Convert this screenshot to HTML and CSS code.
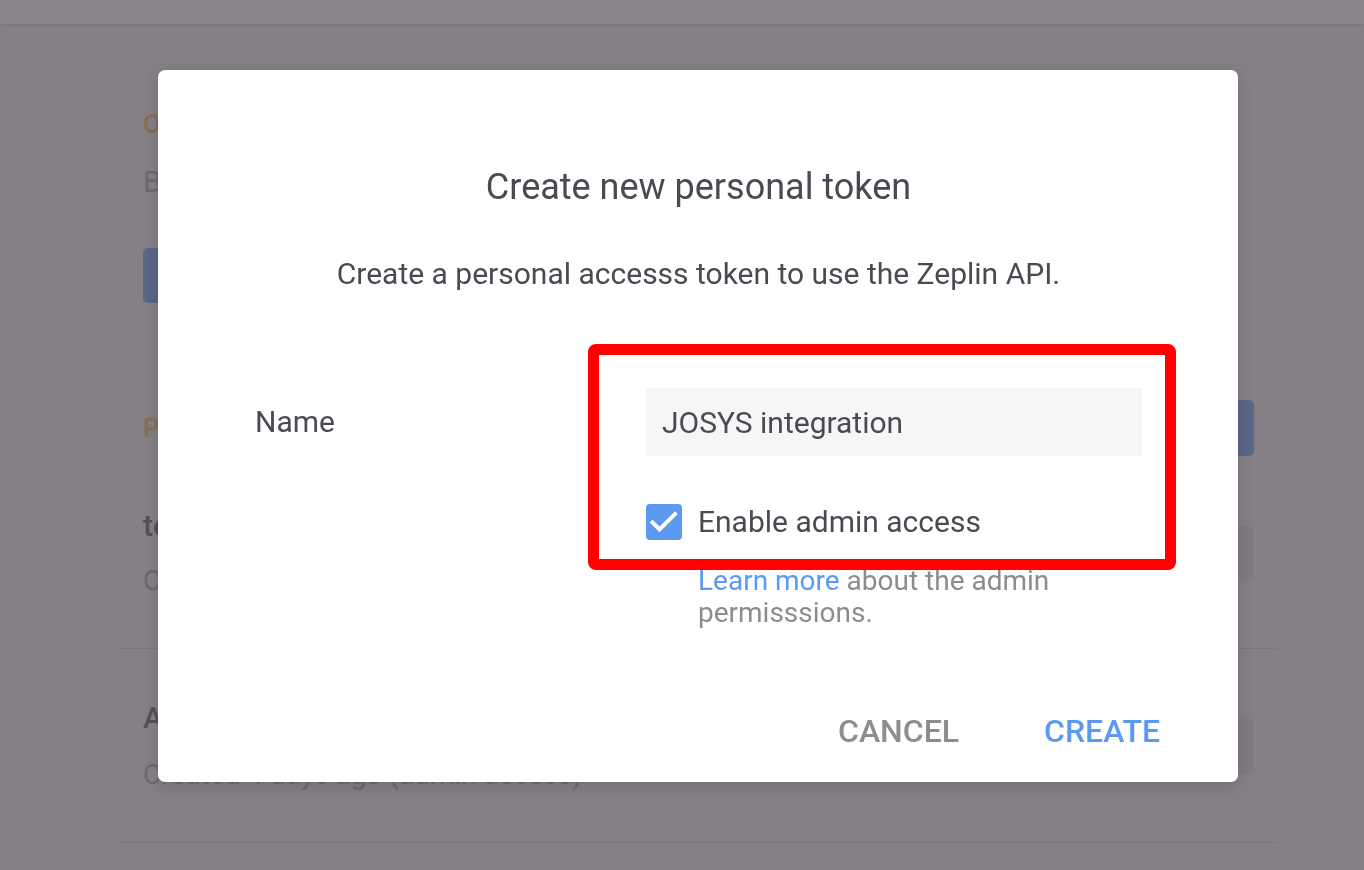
FILE: index.html
```html
<!DOCTYPE html>
<html lang="en">
<head>
<meta charset="utf-8">
<title>Create new personal token</title>
<link rel="stylesheet" href="styles.css">
</head>
<body>
<header class="topbar"></header>
<main class="page">
  <section class="section">
    <h2 class="section-title">OAuth apps</h2>
    <p class="section-text">Build apps</p>
    <button class="btn-primary">Create new app</button>
  </section>
  <section class="section tokens">
    <div class="section-head">
      <h2 class="section-title">Personal</h2>
      <button class="btn-primary btn-small">Generate</button>
    </div>
    <div class="token">
      <div class="token-info">
        <div class="token-name">test</div>
        <div class="token-meta">Created now</div>
      </div>
      <button class="btn-grey">Revoke</button>
    </div>
    <div class="token">
      <div class="token-info">
        <div class="token-name">Admin</div>
        <div class="token-meta">Created 4 days ago (admin access)</div>
      </div>
      <button class="btn-grey">Revoke</button>
    </div>
  </section>
</main>

<div class="overlay">
  <div class="modal">
    <h1 class="modal-title">Create new personal token</h1>
    <p class="modal-sub">Create a personal accesss token to use the Zeplin API.</p>
    <div class="form">
      <label class="form-label" for="tname">Name</label>
      <div class="field">
        <div class="input" id="tname">JOSYS integration</div>
      </div>
      <div></div>
      <div class="field">
        <div class="check-row">
          <span class="checkbox">
            <svg width="36" height="36" viewBox="0 0 36 36"><path d="M6.5 18.5 L13.5 25.5 L29 10" fill="none" stroke="#fff" stroke-width="4" stroke-linecap="square"/></svg>
          </span>
          <span class="check-label">Enable admin access</span>
        </div>
        <p class="help"><span class="link">Learn more</span> about the admin permisssions.</p>
      </div>
    </div>
    <div class="footer">
      <button class="btn-text cancel">CANCEL</button>
      <button class="btn-text create">CREATE</button>
    </div>
    <div class="annotation"></div>
  </div>
</div>
</body>
</html>
```
FILE: styles.css
```css
* { box-sizing: border-box; }
html, body { margin: 0; padding: 0; }
body {
  background: #f7f7f7;
  font-family: Roboto, "Liberation Sans", sans-serif;
  width: 1364px;
  height: 870px;
  overflow: hidden;
}
.topbar {
  height: 24px;
  background: #ffffff;
  box-shadow: 0 1px 3px rgba(0,0,0,0.12);
}
.page {
  width: 1159px;
  margin-left: 118px;
  padding-top: 82px;
}
.section { padding: 0 23px 0 25px; }
.section-title {
  margin: 0;
  font-size: 26px;
  line-height: 36px;
  font-weight: 500;
  color: #ffcf94;
}
.section-text {
  margin: 22px 0 0;
  font-size: 30px;
  line-height: 36px;
  color: #cac6ca;
}
.btn-primary {
  margin-top: 48px;
  height: 55px;
  padding: 0 30px;
  border: 0;
  border-radius: 5px;
  background: #a0c4fa;
  color: #fff;
  font-family: inherit;
  font-size: 22px;
}
.tokens { padding: 0; margin-top: 97px; }
.section-head {
  display: flex;
  justify-content: space-between;
  align-items: center;
  height: 56px;
  padding: 0 23px 0 25px;
}
.btn-small { margin: 0; height: 56px; }
.token {
  display: flex;
  align-items: center;
  justify-content: space-between;
  padding: 52px 23px 49px 25px;
  border-bottom: 1px solid #e2e2e2;
}
.token:last-child { padding-top: 51px; }
.token-name {
  font-size: 30px;
  line-height: 36px;
  font-weight: 500;
  color: #9a969a;
}
.token-meta {
  margin-top: 19px;
  font-size: 28px;
  line-height: 36px;
  color: #cac6ca;
}
.token:last-child .token-meta { margin-top: 21px; }
.btn-grey {
  height: 55px;
  width: 120px;
  border: 0;
  border-radius: 5px;
  background: #ececec;
  color: #ececec;
  font-family: inherit;
}

/* overlay + modal */
.overlay {
  position: fixed;
  inset: 0;
  background: rgba(20, 10, 20, 0.5);
}
.modal {
  position: relative;
  width: 1080px;
  margin: 70px 0 0 158px;
  padding: 95px 96px 21px 97px;
  background: #ffffff;
  border-radius: 7px;
  box-shadow: 0 4px 16px rgba(0,0,0,0.15);
  color: #4d4851;
}
.modal-title {
  margin: 0;
  text-align: center;
  font-size: 36px;
  line-height: 44px;
  font-weight: 400;
  color: #4d4851;
}
.modal-sub {
  margin: 47px 0 0;
  text-align: center;
  font-size: 30px;
  line-height: 36px;
  color: #4d4851;
}
.form {
  margin-top: 96px;
  display: grid;
  grid-template-columns: 391px 1fr;
  row-gap: 48px;
}
.form-label {
  align-self: center;
  font-size: 30px;
  line-height: 36px;
  color: #4d4851;
}
.input {
  height: 68px;
  padding: 0 16px;
  display: flex;
  align-items: center;
  background: #f6f6f6;
  font-size: 30px;
  color: #4d4851;
}
.check-row {
  display: flex;
  align-items: center;
  gap: 16px;
  height: 36px;
}
.checkbox {
  width: 36px;
  height: 36px;
  border-radius: 4px;
  background: #5b9af0;
  display: flex;
}
.check-label {
  font-size: 30px;
  line-height: 36px;
  color: #4d4851;
}
.help {
  margin: 25px 0 0 52px;
  width: 444px;
  font-size: 28px;
  line-height: 32px;
  color: #8e8a8f;
}
.link { color: #5b9af0; }
.footer {
  margin-top: 72px;
  display: flex;
  justify-content: flex-end;
  gap: 53px;
  margin-right: -34px;
}
.btn-text {
  height: 60px;
  padding: 0 16px;
  border: 0;
  background: transparent;
  font-family: inherit;
  font-size: 32px;
  font-weight: 500;
  line-height: 36px;
}
.cancel { color: #8f8b90; }
.create { color: #5b9af0; }
.annotation {
  position: absolute;
  left: 430px;
  top: 274px;
  width: 588px;
  height: 226px;
  border: 11px solid #ff0000;
  border-radius: 8px;
  pointer-events: none;
}
```
